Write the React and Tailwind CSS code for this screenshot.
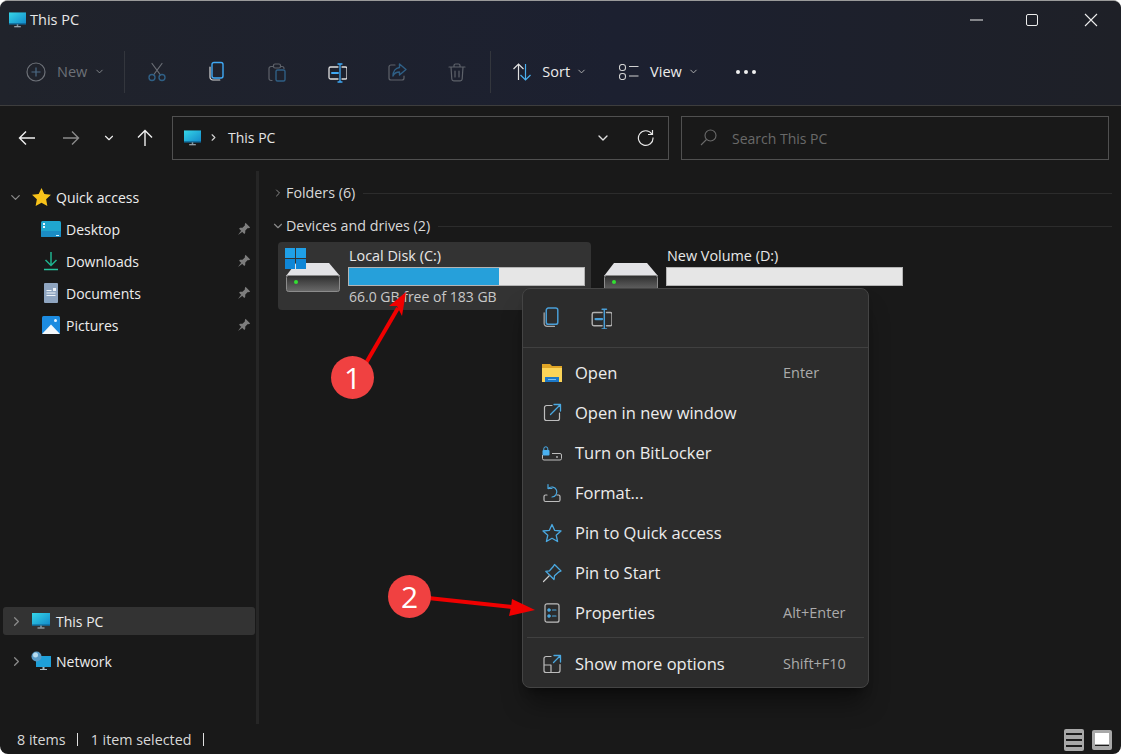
import { ChevronDown, ChevronRight } from 'lucide-react';

const Monitor = ({ className }) => (
  <svg className={className} viewBox="0 0 18 16" fill="none">
    <defs>
      <linearGradient id="mon" x1="0" y1="0" x2="1" y2="1">
        <stop offset="0" stopColor="#35d6e8" />
        <stop offset="1" stopColor="#1288c9" />
      </linearGradient>
    </defs>
    <rect x="0" y="0" width="18" height="12.5" fill="url(#mon)" />
    <rect x="0" y="11.5" width="18" height="1.2" fill="#0d5f8e" />
    <path d="M8.2 12.5h1.6v2H8.2z" fill="#7a98a8" />
    <path d="M5.5 14.6h7v1h-7z" fill="#b8c4cc" />
  </svg>
);

const Stroke = ({ children, size = 20, className = '' }) => (
  <svg className={className} width={size} height={size} viewBox="0 0 20 20" fill="none" strokeWidth="1.2" strokeLinecap="round" strokeLinejoin="round">
    {children}
  </svg>
);

const CopyIcon = ({ blue = '#3fa9f5', grey = '#d8d8d8' }) => (
  <Stroke size={21}>
    <path d="M3 5.5v10.2A2.8 2.8 0 0 0 5.8 18.5h7" stroke={grey} />
    <rect x="5" y="1" width="11" height="15.5" rx="2" stroke={blue} strokeWidth="1.4" />
  </Stroke>
);

const RenameIcon = ({ blue = '#3fa9f5', grey = '#e0e0e0' }) => (
  <Stroke size={22}>
    <path d="M11 5H3.5A1.5 1.5 0 0 0 2 6.5v9A1.5 1.5 0 0 0 3.5 17H11M15 5h3.5A1.5 1.5 0 0 1 20 6.5v9a1.5 1.5 0 0 1-1.5 1.5H15" stroke={grey} strokeWidth="1.3" />
    <path d="M5 11h6" stroke={blue} strokeWidth="2" />
    <path d="M13 2v18M11 2h4M11 20h4" stroke={blue} strokeWidth="1.3" />
  </Stroke>
);

const toolbarIcons = [
  <Stroke key="cut">
    <path d="M5 1.5 13.5 13M15 1.5 6.5 13" stroke="#6b6f76" />
    <circle cx="5" cy="15.5" r="3" stroke="#2f5f85" strokeWidth="1.4" />
    <circle cx="15" cy="15.5" r="3" stroke="#2f5f85" strokeWidth="1.4" />
  </Stroke>,
  <CopyIcon key="copy" />,
  <Stroke key="paste">
    <path d="M14 4.5h1a2 2 0 0 1 2 2M5 18.5H4a2 2 0 0 1-2-2V6.5a2 2 0 0 1 2-2h2" stroke="#5e626a" />
    <rect x="6.5" y="2" width="7" height="4" rx="1.5" stroke="#5e626a" />
    <rect x="9" y="8" width="9" height="11" rx="1.5" stroke="#2f5f85" strokeWidth="1.4" />
  </Stroke>,
  <RenameIcon key="rename" />,
  <Stroke key="share">
    <path d="M8 3H4a2 2 0 0 0-2 2v11a2 2 0 0 0 2 2h11a2 2 0 0 0 2-2v-2" stroke="#5e626a" />
    <path d="M12.5 2 19 7.5l-6.5 5.5V10C9 10 7 11.5 6 14c0-4.5 2.5-8 6.5-8.5z" stroke="#2f5f85" strokeWidth="1.4" />
  </Stroke>,
  <Stroke key="delete">
    <path d="M2 5h16M7 5V3.5A1.5 1.5 0 0 1 8.5 2h3A1.5 1.5 0 0 1 13 3.5V5M4 5l.8 12a2 2 0 0 0 2 1.8h6.4a2 2 0 0 0 2-1.8L16 5M8 9v6M12 9v6" stroke="#5e626a" />
  </Stroke>,
];

const Pin = () => (
  <svg width="14" height="14" viewBox="0 0 14 14" fill="#7d7d7d">
    <path d="M8.5.8 13.2 5.5 11.8 6.2 10.8 6 8.3 8.5 8.2 11 7.3 11.9 2.1 6.7 3 5.8 5.5 5.7 8 3.2 7.8 2.2z" />
    <path d="M4.3 8.5 1 13l4.5-3.3z" />
  </svg>
);

const quickAccess = [
  {
    name: 'Desktop',
    icon: (
      <svg width="20" height="16" viewBox="0 0 20 16">
        <rect width="20" height="16" rx="1.5" fill="#1fa6cf" />
        <rect y="10" width="20" height="6" rx="1" fill="#1b8cc4" />
        <rect x="2" y="2" width="2" height="2" fill="#e8f8ff" />
        <rect x="2" y="5" width="2" height="2" fill="#e8f8ff" />
        <rect x="15" y="14" width="3" height="1" fill="#d8f0ff" />
      </svg>
    ),
  },
  {
    name: 'Downloads',
    icon: (
      <svg width="20" height="20" viewBox="0 0 20 20" fill="none" stroke="#1fb38f" strokeWidth="1.5">
        <path d="M10 1v13M4.5 9 10 14.5 15.5 9" />
        <path d="M3 18.5h14" stroke="#27c29c" />
      </svg>
    ),
  },
  {
    name: 'Documents',
    icon: (
      <svg width="14" height="20" viewBox="0 0 14 20">
        <rect width="14" height="20" rx="1" fill="#8fa5c0" />
        <path d="M2.5 7h5v1h-5zM2.5 9.5h9v1h-9zM2.5 12h9v1h-9zM9 5h3v3H9z" fill="#eef3f8" />
      </svg>
    ),
  },
  {
    name: 'Pictures',
    icon: (
      <svg width="18" height="18" viewBox="0 0 18 18">
        <rect width="18" height="18" rx="1.5" fill="#1c8be0" />
        <path d="M0 18 9 8.5 18 18z" fill="#f4f8fb" />
        <circle cx="13.5" cy="4.5" r="1.5" fill="#e8f4ff" />
      </svg>
    ),
  },
];

const Drive = ({ windows }) => (
  <div className="relative mt-px h-[43px] w-[56px] shrink-0">
    <svg className="absolute left-[1px] top-[15px]" width="54" height="29" viewBox="0 0 54 29">
      <defs>
        <linearGradient id="drive" x1="0" y1="0" x2="0" y2="1">
          <stop offset="0" stopColor="#2e2e2e" />
          <stop offset="1" stopColor="#6a6a6a" />
        </linearGradient>
      </defs>
      <path d="M0 13 10 0h33l11 13z" fill="#e3e3e6" />
      <rect x=".5" y="12.5" width="53" height="16" rx="2" fill="url(#drive)" stroke="#8c8c8c" />
      <circle cx="10" cy="19" r="2" fill="#32e032" />
    </svg>
    {windows && (
      <div className="absolute left-0 top-0 grid h-[21px] w-[21px] grid-cols-2 gap-px">
        <div className="bg-[#1fa0e8]" />
        <div className="bg-[#1fa0e8]" />
        <div className="bg-[#0f86d6]" />
        <div className="bg-[#0f86d6]" />
      </div>
    )}
  </div>
);

const DriveTile = ({ name, used, free, selected, windows }) => (
  <div className={`flex h-[68px] w-[313px] rounded-sm pl-[7px] pt-[5px] ${selected ? 'bg-[#333333]' : ''}`}>
    <Drive windows={windows} />
    <div className="ml-[7px] flex w-[237px] flex-col">
      <span className="ml-px h-[20px] text-[14.4px] leading-[17px] text-[#e8e8e8]">{name}</span>
      <div className="h-[19px] w-[237px] border border-[#b4b4b4] bg-[#e6e6e6]">
        {used && <div className="h-full bg-[#26a0da]" style={{ width: used }} />}
      </div>
      {free && <span className="ml-px mt-[2px] text-[14px] leading-[17px] text-[#c8c8c8]">{free}</span>}
    </div>
  </div>
);

const menuItems = [
  {
    label: 'Open',
    shortcut: 'Enter',
    icon: (
      <svg width="20" height="18" viewBox="0 0 20 18">
        <path d="M0 0h8l2 2h10v15H0z" fill="#e0a526" />
        <path d="M0 4h20v14H0z" fill="#fbd458" />
        <path d="M3 13h14v5H3z" fill="#1c78c8" />
        <path d="M6 15h8v1H6z" fill="#7cc0f0" />
      </svg>
    ),
  },
  {
    label: 'Open in new window',
    icon: (
      <Stroke>
        <path d="M10 2.5H4.5a2 2 0 0 0-2 2v11a2 2 0 0 0 2 2h11a2 2 0 0 0 2-2V10" stroke="#bdbdbd" />
        <path d="M12 1.5h6.5V8M18.5 1.5 8.5 11.5" stroke="#4aa8e0" strokeWidth="1.3" />
      </Stroke>
    ),
  },
  {
    label: 'Turn on BitLocker',
    icon: (
      <svg width="20" height="15" viewBox="0 0 20 15" fill="none">
        <path d="M.5 9v3.5A1.5 1.5 0 0 0 2 14h16a1.500 1.500 0 0 0 1.500-1.500V9A1.500 1.500 0 0 0 18 7.500H10" stroke="#bdbdbd" />
        <path d="M1.800 4V2.800a2 2 0 0 1 4 0V4" stroke="#4ab0f0" />
        <rect x=".5" y="4" width="7" height="5.5" rx="1" fill="#4ab0f0" />
        <circle cx="15" cy="11" r=".9" fill="#bdbdbd" />
      </svg>
    ),
  },
  {
    label: 'Format...',
    icon: (
      <Stroke>
        <path d="M5 12H3.5A1.5 1.5 0 0 0 2 13.5V17a1.5 1.5 0 0 0 1.5 1.5h13A1.5 1.5 0 0 0 18 17v-3.5a1.5 1.5 0 0 0-1.5-1.5H15" stroke="#bdbdbd" />
        <path d="M6 1.5v4h4M6.3 5.5A5 5 0 1 1 10 14" stroke="#4aa8e0" />
      </Stroke>
    ),
  },
  {
    label: 'Pin to Quick access',
    icon: (
      <Stroke>
        <path d="M10 1.5 12.6 7.3 19 8 14.2 12.2 15.6 18.5 10 15.3 4.4 18.5 5.8 12.2 1 8 7.4 7.3z" stroke="#4aa8e0" strokeWidth="1.3" />
      </Stroke>
    ),
  },
  {
    label: 'Pin to Start',
    icon: (
      <Stroke>
        <path d="M12.5 1.5 19 8l-2 .8-4.5 4-.5 3.7L3.8 8.3l3.7-.5 4-4.500z" stroke="#4aa8e0" strokeWidth="1.3" />
        <path d="M7 13 1.5 18.5" stroke="#d0d0d0" />
      </Stroke>
    ),
  },
  {
    label: 'Properties',
    shortcut: 'Alt+Enter',
    icon: (
      <Stroke>
        <rect x="3" y=".8" width="14" height="18.4" rx="2" stroke="#bdbdbd" />
        <circle cx="7" cy="7" r="1.5" fill="#4aa8e0" stroke="#4aa8e0" strokeWidth=".5" />
        <circle cx="7" cy="13" r="1.5" fill="#4aa8e0" stroke="#4aa8e0" strokeWidth=".5" />
        <path d="M10.5 7H14M10.5 13H14" stroke="#4aa8e0" />
      </Stroke>
    ),
  },
];

const MenuRow = ({ item, className = '' }) => (
  <div className={`flex items-center ${className}`}>
    <div className="flex w-[52px] justify-center pl-[5px]">{item.icon}</div>
    <span className="text-[16.5px] text-[#ececec]">{item.label}</span>
    {item.shortcut && <span className="absolute left-[260px] text-[14.5px] text-[#ababab]">{item.shortcut}</span>}
  </div>
);

export default function App() {
  return (
    <div className="h-screen w-full overflow-hidden bg-white font-['Open_Sans','Liberation_Sans',sans-serif]">
      <div className="relative flex h-full flex-col overflow-hidden rounded-lg border-t border-[#9a9a9a] bg-[#191919] text-[14px]">
        {/* title + command bar */}
        <div className="h-[104px] shrink-0 bg-[linear-gradient(90deg,#20232b_0%,#1c2030_55%,#1e2027_100%)]">
          <div className="flex h-[37px] items-center">
            <Monitor className="ml-[9px] h-[16px] w-[17px]" />
            <span className="ml-[4px] text-[14.5px] text-[#e8e8e8]">This PC</span>
            <div className="ml-auto flex items-center text-[#e6e6e6]">
              <svg className="mr-[43px]" width="13" height="2" viewBox="0 0 13 2"><path d="M0 1h13" stroke="#ececec" /></svg>
              <div className="mr-[46px] h-[12px] w-[12px] rounded-[2px] border border-[#ececec]" />
              <svg className="mr-[23px]" width="14" height="14" viewBox="0 0 14 14"><path d="M1 1l12 12M13 1 1 13" stroke="#ececec" strokeWidth="1.1" /></svg>
            </div>
          </div>
          <div className="flex h-[67px] items-center pl-[26px]">
            <svg width="20" height="20" viewBox="0 0 20 20" fill="none" stroke="#6d7178" strokeWidth="1.2">
              <circle cx="10" cy="10" r="9" />
              <path d="M10 5.5v9M5.5 10h9" stroke="#4c6a85" />
            </svg>
            <span className="ml-[11px] text-[14.5px] text-[#6d7178]">New</span>
            <ChevronDown className="ml-[7px] text-[#8a8d92]" size={11} />
            <div className="ml-[19px] h-[42px] w-px bg-[#33363d]" />
            <div className="ml-[22px] flex gap-[40px]">
              {toolbarIcons.map((icon, i) => (
                <div key={i} className="flex h-[22px] w-[20px] items-center justify-center">{icon}</div>
              ))}
            </div>
            <div className="ml-[23px] h-[42px] w-px bg-[#33363d]" />
            <svg className="ml-[21px]" width="20" height="20" viewBox="0 0 20 20" fill="none" strokeWidth="1.2">
              <path d="M6.5 18V2M1.5 7l5-5 5 5" stroke="#e0e0e0" />
              <path d="M13.5 2v16M8.5 13l5 5 5-5" stroke="#4ab0f0" />
            </svg>
            <span className="ml-[10px] text-[14.5px] text-[#ececec]">Sort</span>
            <ChevronDown className="ml-[6px] text-[#b8b8b8]" size={11} />
            <svg className="ml-[32px]" width="20" height="16" viewBox="0 0 20 16" fill="none" stroke="#d0d0d0" strokeWidth="1.1">
              <rect x=".5" y=".5" width="6" height="6" rx="2.5" />
              <rect x=".5" y="9.5" width="6" height="6" rx="2.5" />
              <path d="M10 2.5h9.5M10 12h9.5" />
            </svg>
            <span className="ml-[11px] text-[14.5px] text-[#ececec]">View</span>
            <ChevronDown className="ml-[6px] text-[#b8b8b8]" size={11} />
            <div className="ml-[37px] flex gap-[4px]">
              <div className="h-[4px] w-[4px] rounded-full bg-[#f0f0f0]" />
              <div className="h-[4px] w-[4px] rounded-full bg-[#f0f0f0]" />
              <div className="h-[4px] w-[4px] rounded-full bg-[#f0f0f0]" />
            </div>
          </div>
        </div>

        {/* address row */}
        <div className="flex h-[66px] shrink-0 items-center border-t border-[#3d3d3d] pb-[2px]">
          <svg className="ml-[18px]" width="18" height="16" viewBox="0 0 18 16" fill="none" stroke="#f0f0f0" strokeWidth="1.4"><path d="M17 8H1.5M8 1.500 1.500 8 8 14.500" /></svg>
          <svg className="ml-[26px]" width="18" height="16" viewBox="0 0 18 16" fill="none" stroke="#8a8a8a" strokeWidth="1.4"><path d="M1 8h15.5M10 1.500 16.500 8 10 14.500" /></svg>
          <ChevronDown className="ml-[22px] text-[#ececec]" size={14} strokeWidth={2} />
          <svg className="ml-[21px]" width="16" height="18" viewBox="0 0 16 18" fill="none" stroke="#f0f0f0" strokeWidth="1.4"><path d="M8 17V1.5M1 8.5l7-7 7 7" /></svg>
          <div className="ml-[19px] flex h-[44px] w-[497px] items-center border border-[#505050]">
            <Monitor className="ml-[11px] h-[16px] w-[17px]" />
            <ChevronRight className="ml-[7px] text-[#d0d0d0]" size={11} strokeWidth={2.5} />
            <span className="ml-[9px] text-[14px] text-[#e4e4e4]">This PC</span>
            <ChevronDown className="ml-auto text-[#e0e0e0]" size={16} />
            <svg className="ml-[26px] mr-[14px]" width="17" height="17" viewBox="0 0 17 17" fill="none" stroke="#e6e6e6" strokeWidth="1.2"><path d="M14.8 5A7.3 7.3 0 1 0 16 8.5M15.5 1v4.5H11" /></svg>
          </div>
          <div className="ml-[12px] flex h-[44px] w-[428px] items-center border border-[#505050]">
            <svg className="ml-[18px]" width="17" height="17" viewBox="0 0 17 17" fill="none" stroke="#6a6a6a" strokeWidth="1.1"><circle cx="10.5" cy="6.5" r="5.5" /><path d="M6.5 10.5 1 16" /></svg>
            <span className="ml-[15px] pt-px text-[14px] text-[#696969]">Search This PC</span>
          </div>
        </div>

        {/* body */}
        <div className="flex min-h-0 flex-1">
          <aside className="flex w-[256px] shrink-0 flex-col pl-[3px] pr-px">
            <div className="mt-[10px] flex h-[32px] items-center">
              <ChevronDown className="ml-[5px] text-[#8a8a8a]" size={15} strokeWidth={2} />
              <svg className="ml-[9px]" width="19" height="18" viewBox="0 0 20 19"><path d="M10 0 13 6.3 20 7.2 14.900 12 16.200 19 10 15.600 3.800 19 5.100 12 0 7.200 7 6.300z" fill="#f7c21a" /></svg>
              <span className="ml-[5px] text-[#ededed]">Quick access</span>
            </div>
            {quickAccess.map(item => (
              <div key={item.name} className="flex h-[32px] items-center">
                <div className="flex w-[59px] justify-end"><div className="flex w-[22px] justify-center">{item.icon}</div></div>
                <span className="ml-[4px] text-[#ededed]">{item.name}</span>
                <div className="ml-auto mr-[4px]"><Pin /></div>
              </div>
            ))}
            <div className="mt-[266px] flex h-[28px] items-center rounded-[3px] bg-[#333333]">
              <ChevronRight className="ml-[6px] text-[#8a8a8a]" size={15} strokeWidth={2} />
              <Monitor className="ml-[8px] h-[16px] w-[18px]" />
              <span className="ml-[6px] text-[#ededed]">This PC</span>
            </div>
            <div className="mt-[12px] flex h-[28px] items-center">
              <ChevronRight className="ml-[6px] text-[#8a8a8a]" size={15} strokeWidth={2} />
              <svg className="ml-[7px]" width="20" height="20" viewBox="0 0 20 20">
                <rect x="5" y="5" width="15" height="11" fill="#1e9fd8" />
                <path d="M11.5 16h2v2h-2zM9 18h7v1H9z" fill="#a8b8c0" />
                <circle cx="5.5" cy="5.5" r="5" fill="#5a9cc8" />
                <circle cx="4.5" cy="4" r="2.5" fill="#b8dcf0" />
              </svg>
              <span className="ml-[5px] text-[#ededed]">Network</span>
            </div>
          </aside>
          <div className="w-[3px] shrink-0 bg-[#262626]" />
          <main className="min-w-0 flex-1 pl-[13px] pr-[9px]">
            <div className="mt-[12px] flex h-[20px] items-center">
              <ChevronRight className="text-[#8a8a8a]" size={12} />
              <span className="ml-[2px] text-[14.3px] text-[#d8d8d8]">Folders (6)</span>
              <div className="ml-[8px] h-px flex-1 bg-[#2c2c2c]" />
            </div>
            <div className="mt-[13px] flex h-[20px] items-center">
              <ChevronDown className="-ml-px text-[#8a8a8a]" size={14} />
              <span className="ml-px text-[14.3px] text-[#d8d8d8]">Devices and drives (2)</span>
              <div className="ml-[8px] h-px flex-1 bg-[#2c2c2c]" />
            </div>
            <div className="mt-[6px] flex gap-[5px] pl-[6px]">
              <DriveTile name="Local Disk (C:)" used="64%" free="66.0 GB free of 183 GB" selected windows />
              <DriveTile name="New Volume (D:)" />
            </div>
          </main>
        </div>

        {/* status bar */}
        <div className="flex h-[30px] shrink-0 items-center pl-[17px] pt-px text-[14.3px] text-[#d8d8d8]">
          <span>8 items</span>
          <div className="ml-[11px] h-[13px] w-px bg-[#e0e0e0]" />
          <span className="ml-[13px]">1 item selected</span>
          <div className="ml-[12px] h-[13px] w-px bg-[#e0e0e0]" />
          <div className="ml-auto flex flex-col gap-[4px] rounded-[2px] bg-[#a8a8a8] px-[2px] py-[4px]">
            <div className="h-[2px] w-[16px] bg-[#1c1c1c]" />
            <div className="h-[2px] w-[16px] bg-[#1c1c1c]" />
            <div className="h-[2px] w-[16px] bg-[#1c1c1c]" />
          </div>
          <div className="ml-[8px] mr-[9px] flex h-[20px] w-[20px] flex-col rounded-[2px] bg-[#a8a8a8] p-[3px]">
            <div className="h-[11px] bg-white" />
            <div className="mt-[1px] h-px bg-[#1c1c1c]" />
          </div>
        </div>

        {/* context menu */}
        <div className="absolute left-[522px] top-[287px] h-[400px] w-[347px] rounded-lg border border-[#444444] bg-[#2c2c2c] shadow-xl shadow-black/40">
          <div className="flex h-[59px] items-center gap-[28px] border-b border-[#404040] pl-[18px] pb-px">
            <CopyIcon blue="#4a9fd8" grey="#a8a8a8" />
            <RenameIcon blue="#4a9fd8" grey="#b0b0b0" />
          </div>
          <div className="pt-[5px]">
            {menuItems.map(item => (
              <MenuRow key={item.label} item={item} className="h-[40px]" />
            ))}
          </div>
          <div className="mx-[4px] mt-[4px] h-px bg-[#404040]" />
          <MenuRow
            className="mt-[6px] h-[40px]"
            item={{
              label: 'Show more options',
              shortcut: 'Shift+F10',
              icon: (
                <Stroke>
                  <path d="M9 2.5H4a2 2 0 0 0-2 2v12a2 2 0 0 0 2 2h12a2 2 0 0 0 2-2v-6M2 11h7v7.5" stroke="#bdbdbd" />
                  <path d="M12 1.5h6.5V8M18.5 1.5 11.5 8.5" stroke="#4aa8e0" strokeWidth="1.3" />
                </Stroke>
              ),
            }}
          />
        </div>

        {/* annotation arrows */}
        <svg className="pointer-events-none absolute left-0 top-0" width="1121" height="754" viewBox="0 0 1121 754">
          <path d="M366 362 398 307" stroke="#f00000" strokeWidth="4" />
          <path d="M406 291 402 315 397 305 389 305z" fill="#f00000" />
          <path d="M428 597 512 606" stroke="#f00000" strokeWidth="4" />
          <path d="M535 609 509 615 511 606 512 598z" fill="#f00000" />
        </svg>
        <div className="absolute left-[331px] top-[355px] flex h-[43px] w-[43px] items-center justify-center rounded-full bg-[#f04141] text-[30px] font-medium text-white">1</div>
        <div className="absolute left-[388px] top-[574px] flex h-[43px] w-[43px] items-center justify-center rounded-full bg-[#f04141] text-[30px] font-medium text-white">2</div>
      </div>
    </div>
  );
}
